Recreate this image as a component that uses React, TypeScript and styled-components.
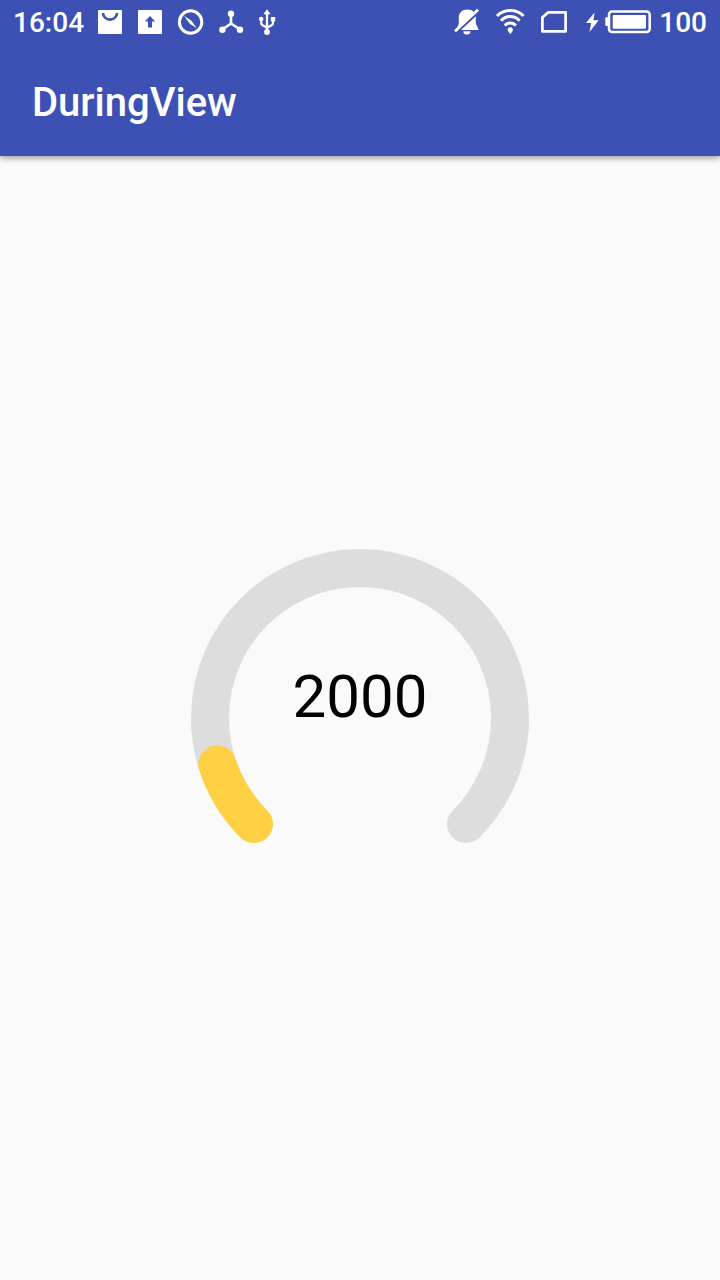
import React from "react";
import styled, { createGlobalStyle } from "styled-components";

const INDIGO = "#3d50b3";

const GlobalStyle = createGlobalStyle`
  * { box-sizing: border-box; }
  body {
    margin: 0;
    background: #fafafa;
    font-family: Roboto, "Noto Sans", sans-serif;
  }
`;

const Screen = styled.div`
  display: flex;
  flex-direction: column;
  min-height: 100vh;
`;

const Header = styled.header`
  background: ${INDIGO};
  color: #fff;
  box-shadow: 0 2px 6px rgba(0, 0, 0, 0.4);
`;

const StatusBar = styled.div`
  display: flex;
  align-items: center;
  justify-content: space-between;
  height: 44px;
  padding: 0 13px;
`;

const StatusGroup = styled.div<{ $gap: number }>`
  display: flex;
  align-items: center;
  gap: ${({ $gap }) => $gap}px;
`;

const StatusText = styled.span`
  padding-top: 2px;
  font-size: 28px;
  line-height: 40px;
  font-weight: 500;
`;

const StatusIcon = styled.svg`
  display: block;
  height: 28px;
  overflow: visible;
  fill: #fff;
`;

const AppBar = styled.div`
  display: flex;
  align-items: center;
  height: 112px;
  padding: 6px 32px 0;
`;

const Title = styled.h1`
  margin: 0;
  font-size: 40px;
  line-height: 48px;
  font-weight: 500;
`;

const Content = styled.main`
  flex: 1;
  display: grid;
  place-items: center;
`;

const Gauge = styled.div`
  display: grid;
  place-items: center;
  > * { grid-area: 1 / 1; }
`;

const Dial = styled.svg`
  display: block;
  fill: none;
  stroke-width: 38px;
  stroke-linecap: round;
`;

const Value = styled.output`
  padding-bottom: 42px;
  font-size: 60px;
  line-height: 72px;
  color: #000;
`;

const RADIUS = 150;
const CENTER = 170;
const START = 135;
const SWEEP = 270;

function arc(fraction: number) {
  const point = (deg: number) => {
    const a = (deg * Math.PI) / 180;
    return `${CENTER + RADIUS * Math.cos(a)} ${CENTER + RADIUS * Math.sin(a)}`;
  };
  const large = SWEEP * fraction > 180 ? 1 : 0;
  return `M${point(START)} A${RADIUS} ${RADIUS} 0 ${large} 1 ${point(START + SWEEP * fraction)}`;
}

const BagIcon = () => (
  <StatusIcon width="24" viewBox="0 0 24 28" aria-hidden="true">
    <rect y="2" width="24" height="24" rx="1" />
    <path d="M5 5a7 6.6 0 0 0 14 0" fill="none" stroke={INDIGO} strokeWidth="2.6" />
  </StatusIcon>
);

const UploadIcon = () => (
  <StatusIcon width="24" viewBox="0 0 24 28" aria-hidden="true">
    <rect y="2" width="24" height="24" rx="1" />
    <path d="M12 8l5.2 5.6H14v6h-4v-6H6.8z" fill={INDIGO} />
  </StatusIcon>
);

const CompassIcon = () => (
  <StatusIcon width="26" viewBox="0 0 26 28" aria-hidden="true">
    <circle cx="12.6" cy="14" r="11.2" fill="none" stroke="#fff" strokeWidth="3" />
    <path d="M6.2 8L12.2 11.8Q13.4 12.7 14.2 13.8L18.8 20.2L12.6 16.2Q11.4 15.3 10.6 14.2z" />
  </StatusIcon>
);

const HubIcon = () => (
  <StatusIcon width="24" viewBox="0 0 24 28" aria-hidden="true">
    <path d="M11 6v9.5L2.5 21.3M11 15.5L20 21.3" fill="none" stroke="#fff" strokeWidth="2.6" />
    <circle cx="11" cy="5.8" r="3.2" />
    <circle cx="2.4" cy="21.8" r="3.2" />
    <circle cx="20" cy="21.8" r="3.2" />
  </StatusIcon>
);

const UsbIcon = () => (
  <StatusIcon width="16" viewBox="0 0 16 28" aria-hidden="true">
    <path d="M7 5v19M1.200 11v4q0 1.800 1.600 2.400L7 19.600l4.400-2.200q1.600-.6 1.600-2.400V11" fill="none" stroke="#fff" strokeWidth="2.3" />
    <path d="M7 1.300l3.600 4.900H3.400z" />
    <circle cx="1.2" cy="11" r="2.3" />
    <rect x="10.8" y="9" width="4.4" height="4.4" />
    <circle cx="7" cy="24" r="2.9" />
  </StatusIcon>
);

const MutedBellIcon = () => (
  <StatusIcon width="26" viewBox="0 0 26 28" aria-hidden="true">
    <path d="M13.400 1.500C8 1.500 4.800 5 4.800 9.500V15.500L2.500 22H24.800L21.800 15.500V9.500C21.800 5 18.700 1.500 13.400 1.500z" />
    <path d="M9.300 23.300h7.200a3.600 3.300 0 0 1-7.200 0z" />
    <path d="M26.500 1.800L3.200 23.500" stroke={INDIGO} strokeWidth="3" />
    <path d="M24 1.800L1 23.200" stroke="#fff" strokeWidth="2.8" />
  </StatusIcon>
);

const WifiIcon = () => (
  <StatusIcon width="29" viewBox="0 0 29 28" aria-hidden="true">
    <g fill="none" stroke="#fff" strokeWidth="3">
      <path d="M1 8A19 19 0 0 1 27.600 8" />
      <path d="M5 12.700A12.200 12.200 0 0 1 23.600 12.700" />
      <path d="M8.800 17.500A7.100 7.100 0 0 1 19.800 17.500" />
    </g>
    <path d="M14.300 26.300l-2.300-3.300a2.600 2.600 0 1 1 4.600 0z" />
  </StatusIcon>
);

const SimIcon = () => (
  <StatusIcon width="26" viewBox="0 0 26 28" aria-hidden="true">
    <path d="M7 4.400H24.600V23.400H1.400V9.600z" fill="none" stroke="#fff" strokeWidth="2.7" strokeLinejoin="round" />
  </StatusIcon>
);

const BatteryIcon = () => (
  <StatusIcon width="68" viewBox="0 0 68 28" aria-hidden="true">
    <path d="M11.600 4.500L3 15h5.200l-1.700 9L15.700 12.200h-5.200z" />
    <rect x="22.3" y="9.3" width="4" height="8.7" rx="1" />
    <rect x="26" y="3.5" width="40.7" height="20.4" rx="3" fill="none" stroke="#fff" strokeWidth="2.5" />
    <rect x="29.7" y="6.9" width="33.3" height="13.8" rx="1" />
  </StatusIcon>
);

export default function App() {
  return (
    <Screen>
      <GlobalStyle />
      <Header>
        <StatusBar>
          <StatusGroup $gap={14}>
            <StatusText>16:04</StatusText>
            <StatusGroup $gap={16}>
              <BagIcon />
              <UploadIcon />
              <CompassIcon />
              <HubIcon />
              <UsbIcon />
            </StatusGroup>
          </StatusGroup>
          <StatusGroup $gap={8}>
            <StatusGroup $gap={16}>
              <MutedBellIcon />
              <WifiIcon />
              <SimIcon />
              <BatteryIcon />
            </StatusGroup>
            <StatusText>100</StatusText>
          </StatusGroup>
        </StatusBar>
        <AppBar>
          <Title>DuringView</Title>
        </AppBar>
      </Header>
      <Content>
        <Gauge>
          <Dial width="340" height="340" viewBox="0 0 340 340" aria-hidden="true">
            <path d={arc(1)} stroke="#dddddd" />
            <path d={arc(0.1)} stroke="#ffcf44" />
          </Dial>
          <Value>2000</Value>
        </Gauge>
      </Content>
    </Screen>
  );
}
